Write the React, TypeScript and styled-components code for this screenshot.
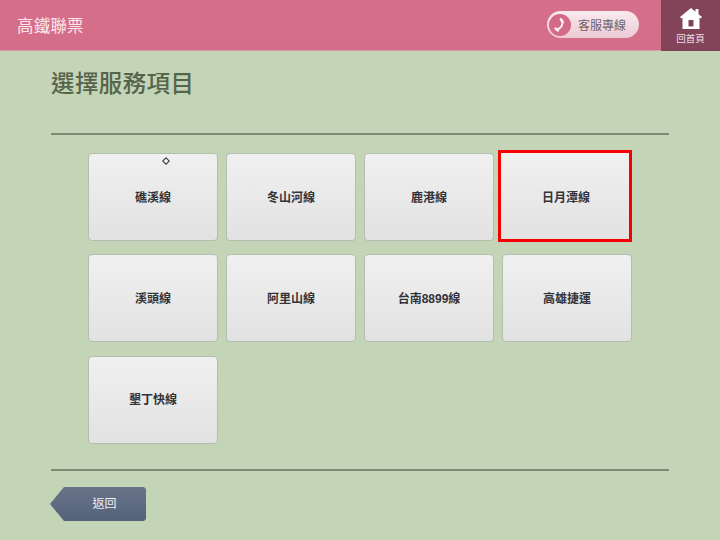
import React from 'react'
import styled, { createGlobalStyle } from 'styled-components'

const services = ['礁溪線', '冬山河線', '鹿港線', '日月潭線', '溪頭線', '阿里山線', '台南8899線', '高雄捷運', '墾丁快線']

const GlobalStyle = createGlobalStyle`
  html, body { margin: 0; padding: 0; background: #c4d4b6; }
  body { font-family: "Liberation Sans", "Noto Sans CJK TC", sans-serif; }
`

const Page = styled.div`
  width: 720px;
  height: 540px;
  overflow: hidden;
  display: flex;
  flex-direction: column;
  background: #c4d4b6;
`

const Header = styled.header`
  height: 50px;
  flex: none;
  display: flex;
  align-items: center;
  padding-left: 17px;
  background: linear-gradient(#d66f8b, #d46d87);
  border-bottom: 1px solid #d3a3a3;
`

const Brand = styled.div`
  flex: 1;
  color: #fbe6ec;
  font-size: 16.5px;
  letter-spacing: 0.2px;
`

const Hotline = styled.div`
  width: 92px;
  height: 27px;
  margin-right: 22px;
  margin-top: -1px;
  display: flex;
  align-items: center;
  gap: 7px;
  padding-left: 2px;
  box-sizing: border-box;
  border-radius: 14px;
  background: linear-gradient(#f9eaee, #eccad5);
  color: #6f6268;
  font-size: 12px;
`

const PhoneBadge = styled.span`
  width: 22px;
  height: 22px;
  display: flex;
  align-items: center;
  justify-content: center;
  border-radius: 50%;
  background: #d4698a;
`

const HomeLink = styled.div`
  width: 59px;
  height: 51px;
  margin-bottom: -1px;
  display: flex;
  flex-direction: column;
  align-items: center;
  padding-top: 8px;
  box-sizing: border-box;
  background: #83445a;
  color: #efdce2;
  font-size: 9.5px;
  line-height: 11px;
  svg { margin-bottom: 4px; }
`

const Content = styled.main`
  flex: 1;
  display: flex;
  flex-direction: column;
  padding: 0 51px;
`

const Title = styled.h1`
  height: 84px;
  margin: 0;
  padding-top: 17px;
  box-sizing: border-box;
  border-bottom: 2px solid #7c8973;
  color: #56644b;
  font-size: 23.5px;
  font-weight: 500;
  line-height: 32px;
  letter-spacing: 0.4px;
`

const Grid = styled.div`
  height: 336px;
  padding: 18px 0 0 37px;
  box-sizing: border-box;
  border-bottom: 2px solid #7c8973;
  display: grid;
  grid-template-columns: repeat(4, 130px);
  grid-auto-rows: 88px;
  gap: 13.3px 8px;
`

const Card = styled.button<{ $selected?: boolean }>`
  position: relative;
  padding: ${p => (p.$selected ? '0 0 0 2px' : '0 0 2px')};
  font: inherit;
  font-size: 12px;
  font-weight: 700;
  color: #33333a;
  border: ${p => (p.$selected ? '3px solid #f40000' : '1px solid #b4beae')};
  border-radius: ${p => (p.$selected ? '0' : '4px')};
  margin: ${p => (p.$selected ? '-3px 0 -1px -4px' : '0')};
  background: linear-gradient(#f0f0f0, #e2e2e2);
`

const CursorMark = styled.svg`
  position: absolute;
  top: 3px;
  left: 73px;
`

const Footer = styled.footer`
  padding-top: 16px;
  margin-left: -1px;
`

const BackButton = styled.button`
  width: 96px;
  height: 34px;
  padding: 0 0 3px 13px;
  border: none;
  font: inherit;
  font-size: 12px;
  color: #eef0f3;
  background: linear-gradient(#68748a, #56617a);
  clip-path: polygon(14px 0, 94px 0, 96px 2px, 96px 32px, 94px 34px, 14px 34px, 0 17px);
`

export default function App() {
  return (
    <Page>
      <GlobalStyle />
      <Header>
        <Brand>高鐵聯票</Brand>
        <Hotline>
          <PhoneBadge>
            <svg width="16" height="16" viewBox="0 0 24 24" fill="none" stroke="#fbeef2" strokeLinecap="round">
              <path d="M15 5.500C17.500 11 14 17 7 19" strokeWidth="3" />
              <path d="M13.500 3.500 16 7.500M5.500 17.500 9 20" strokeWidth="4" />
            </svg>
          </PhoneBadge>
          客服專線
        </Hotline>
        <HomeLink>
          <svg width="22" height="21" viewBox="0 0 22 21">
            <path fillRule="evenodd" fill="#fff" d="M11 0 15.500 3.700V1H18.500V6.200L22 9.100 20.800 10.600 19.500 9.500V21H2.500V9.500L1.200 10.600 0 9.100ZM8.500 12V18.500H13.500V12Z" />
          </svg>
          回首頁
        </HomeLink>
      </Header>
      <Content>
        <Title>選擇服務項目</Title>
        <Grid>
          {services.map((name, index) => (
            <Card key={name} $selected={name === '日月潭線'}>
              {index === 0 && (
                <CursorMark width="8" height="8" viewBox="0 0 8 8">
                  <path d="M4 .8 7.200 4 4 7.200.8 4Z" fill="#fff" stroke="#444" strokeWidth="1.200" />
                </CursorMark>
              )}
              {name}
            </Card>
          ))}
        </Grid>
        <Footer>
          <BackButton>返回</BackButton>
        </Footer>
      </Content>
    </Page>
  )
}
